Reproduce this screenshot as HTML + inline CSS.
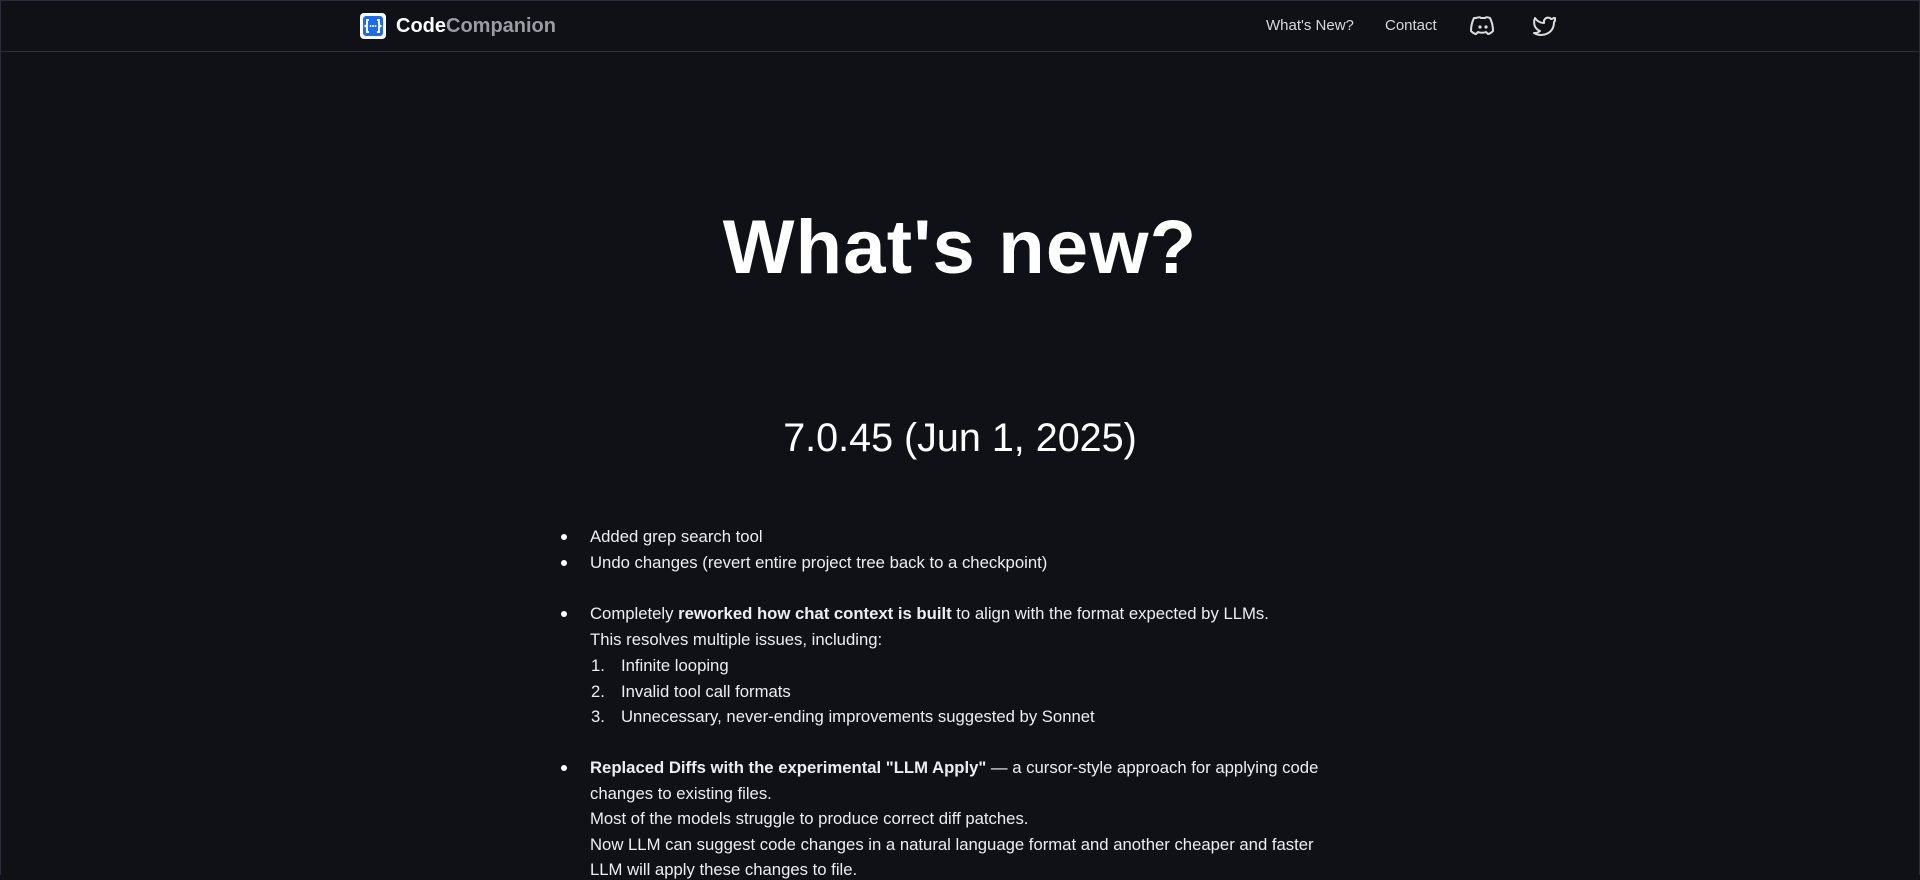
<!DOCTYPE html>
<html><head><meta charset="utf-8"><style>
*{margin:0;padding:0;box-sizing:border-box}
html,body{width:1920px;height:875px;overflow:hidden;background:#0f1117;color:#fff;font-family:"Liberation Sans",sans-serif}
.frame{position:absolute;inset:0;border:1px solid #2a2d38;border-bottom:none}
header{position:absolute;left:0;top:0;width:1920px;height:52px;border-bottom:1px solid #2a2d3a}
.logo{position:absolute;left:360px;top:13px;width:26px;height:26px;background:#fff;border-radius:4px}
.brand{position:absolute;left:396px;top:13px;font-size:20px;font-weight:bold;line-height:26px}
.brand span{color:#9a9ba3}
.nav{position:absolute;top:17px;font-size:15px;color:#d8d9de;line-height:18px}
h1{position:absolute;left:0;width:1920px;top:203px;text-align:center;font-size:76px;font-weight:bold;letter-spacing:1.2px;line-height:90px}
h2{position:absolute;left:0;width:1920px;top:413px;text-align:center;font-size:39.5px;font-weight:normal;line-height:50px}
.r{position:absolute;left:590px;font-size:16.7px;line-height:20px;color:#eceef2;white-space:nowrap}
.b{position:absolute;left:561px;width:6px;height:6px;border-radius:50%;background:#fff}
.n{position:absolute;left:591px;font-size:16.7px;line-height:20px;color:#eceef2}
</style></head><body>
<div class="frame"></div>
<header>
<div class="logo"><svg width="26" height="26" viewBox="0 0 26 26"><rect x="3" y="3" width="20" height="20" rx="3" fill="#1d6cf0"/><path d="M9 7h-2v5l-1.5 1 1.5 1v5h2M17 7h2v5l1.5 1-1.5 1v5h-2" stroke="#fff" stroke-width="2" fill="none"/><circle cx="10.5" cy="13" r="1" fill="#fff"/><circle cx="13" cy="13" r="1" fill="#fff"/><circle cx="15.5" cy="13" r="1" fill="#fff"/></svg></div>
<div class="brand">Code<span>Companion</span></div>
<div class="nav" style="left:1266px">What's New?</div>
<div class="nav" style="left:1385px">Contact</div>
<svg style="position:absolute;left:1470px;top:14px" width="26" height="24" viewBox="0 0 26 24"><path d="M6 4c3-1 4-1 5 0h4c1-1 2-1 5 0 2 4 3 8 3 13-2 2-4 3-5 3l-2-2c-2 1-6 1-8 0l-2 2c-1 0-3-1-5-3 0-5 1-9 3-13z" stroke="#ddd" stroke-width="2" fill="none" stroke-linejoin="round"/><circle cx="10" cy="13" r="1.6" fill="#ddd"/><circle cx="16" cy="13" r="1.6" fill="#ddd"/></svg>
<svg style="position:absolute;left:1532px;top:15px" width="24" height="22" viewBox="0 0 24 22"><path d="M22 3c-1 .6-2 1-3 1-1.5-1.8-4.5-1.8-6 0-1 1-1.3 2.5-1 4-4 0-7-2-9-5 0 0-4 9 5 13-2 1.5-4 2.3-6 2 9 5 20 0 20-11 1-1 1.5-2.5 1-4z" stroke="#ddd" stroke-width="2" fill="none" stroke-linejoin="round"/></svg>
</header>
<h1>What's new?</h1>
<h2>7.0.45 (Jun 1, 2025)</h2>

<div class="b" style="top:534px"></div><div class="r" style="top:527px">Added grep search tool</div>
<div class="b" style="top:560px"></div><div class="r" style="top:553px">Undo changes (revert entire project tree back to a checkpoint)</div>
<div class="b" style="top:611px"></div><div class="r" style="top:604px">Completely <b>reworked how chat context is built</b> to align with the format expected by LLMs.</div>
<div class="r" style="top:630px">This resolves multiple issues, including:</div>
<div class="n" style="top:656px">1.</div><div class="r" style="top:656px;left:621px">Infinite looping</div>
<div class="n" style="top:682px">2.</div><div class="r" style="top:682px;left:621px">Invalid tool call formats</div>
<div class="n" style="top:707px">3.</div><div class="r" style="top:707px;left:621px">Unnecessary, never-ending improvements suggested by Sonnet</div>
<div class="b" style="top:765px"></div><div class="r" style="top:758px"><b>Replaced Diffs with the experimental "LLM Apply"</b> — a cursor-style approach for applying code</div>
<div class="r" style="top:784px">changes to existing files.</div>
<div class="r" style="top:809px">Most of the models struggle to produce correct diff patches.</div>
<div class="r" style="top:835px">Now LLM can suggest code changes in a natural language format and another cheaper and faster</div>
<div class="r" style="top:860px">LLM will apply these changes to file.</div>
</body></html>
